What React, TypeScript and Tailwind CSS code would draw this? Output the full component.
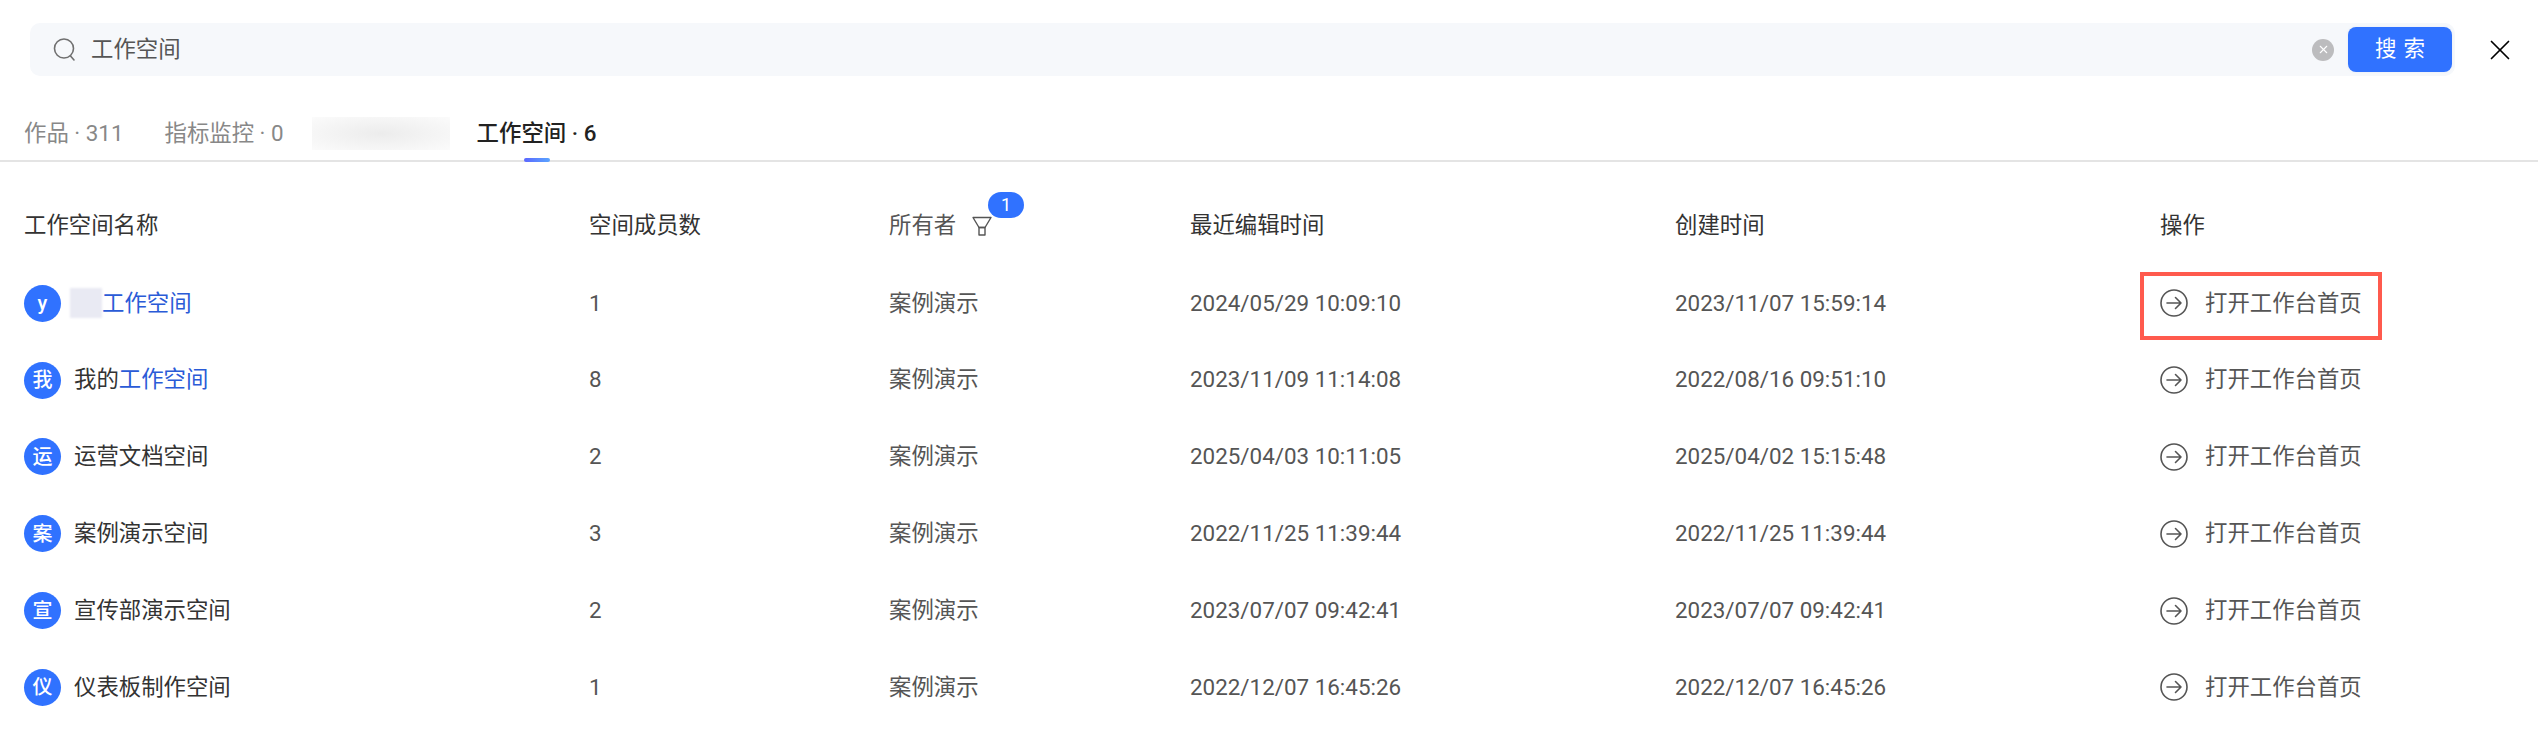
import { X } from 'lucide-react';

const ROWS = [
  { badge: 'y', prefix: '', blur: true, hit: '工作空间', members: 1, edited: '2024/05/29 10:09:10', created: '2023/11/07 15:59:14', marked: true },
  { badge: '我', prefix: '我的', hit: '工作空间', members: 8, edited: '2023/11/09 11:14:08', created: '2022/08/16 09:51:10' },
  { badge: '运', prefix: '运营文档空间', hit: '', members: 2, edited: '2025/04/03 10:11:05', created: '2025/04/02 15:15:48' },
  { badge: '案', prefix: '案例演示空间', hit: '', members: 3, edited: '2022/11/25 11:39:44', created: '2022/11/25 11:39:44' },
  { badge: '宣', prefix: '宣传部演示空间', hit: '', members: 2, edited: '2023/07/07 09:42:41', created: '2023/07/07 09:42:41' },
  { badge: '仪', prefix: '仪表板制作空间', hit: '', members: 1, edited: '2022/12/07 16:45:26', created: '2022/12/07 16:45:26' },
];

const GRID = 'grid grid-cols-[565px_300px_301px_485px_485px_1fr] pl-6 items-center';

function ArrowCircle() {
  return (
    <svg width="28" height="28" viewBox="0 0 28 28" fill="none" stroke="#555" strokeWidth="1.6" strokeLinecap="round" strokeLinejoin="round">
      <circle cx="14" cy="14" r="13" />
      <path d="M7 14h14M15.5 8.5 21 14l-5.5 5.5" />
    </svg>
  );
}

function Funnel() {
  return (
    <svg width="20" height="20" viewBox="0 0 20 20" fill="none" stroke="#555" strokeWidth="1.4" strokeLinejoin="round">
      <path d="M1 1.5h18l-6 10H7z" />
      <path d="M7 11.5h6V19H7z" />
    </svg>
  );
}

function SearchGlyph() {
  return (
    <svg width="24" height="24" viewBox="0 0 24 24" fill="none" stroke="#707070" strokeWidth="1.6" strokeLinecap="round">
      <circle cx="11" cy="10.5" r="9.5" />
      <path d="m17.5 18 3.5 4" />
    </svg>
  );
}

export default function App() {
  return (
    <div className="h-[732px] overflow-hidden bg-white font-['Roboto','Noto_Sans_CJK_SC',sans-serif] text-[22.4px] text-[#333]">
      <div className="flex items-center pt-[23px] pl-[30px]">
        <div className="flex h-[53px] w-[2425px] items-center rounded-[10px] bg-[#f6f8fb] pl-[23px] pr-[3px]">
          <SearchGlyph />
          <span className="ml-[14px] flex-1 text-[#555]">工作空间</span>
          <span className="mr-[14px] flex h-[22px] w-[22px] items-center justify-center rounded-full bg-[#bcbcbe] text-white">
            <X size={13} strokeWidth={2} />
          </span>
          <button className="h-[45px] w-[104px] rounded-[8px] bg-[#3072ff] pl-[7px] text-[21.5px] tracking-[7px] text-white shadow-[0_0_3px_#e4ebf8]">搜索</button>
        </div>
        <X size={34} strokeWidth={1.2} className="ml-[28px] text-black" />
      </div>

      <div className="mt-[38px] flex h-[48px] items-start gap-[41px] border-b-2 border-[#e4e4e4] pl-[24px] pt-[3px] text-[#888]">
        <span>作品 · 311</span>
        <span>指标监控 · 0</span>
        <span className="-ml-[13px] h-[33px] w-[138px] bg-[radial-gradient(ellipse_at_center,#ececec,#fbfbfb_100%)]" />
        <span className="relative -ml-[14px] h-[45px] font-medium text-[#222]">
          工作空间 · 6
          <span className="absolute bottom-0 left-[47px] h-1 w-[26px] rounded-sm bg-gradient-to-r from-[#5b66ff] to-[#5aa4ff]" />
        </span>
      </div>

      <div className={`${GRID} mt-[24px] h-[79px]`}>
        <span>工作空间名称</span>
        <span>空间成员数</span>
        <span className="relative flex items-center text-[#555]">
          所有者
          <span className="ml-[16px] mt-[2px]"><Funnel /></span>
          <span className="absolute -top-[17px] left-[99px] flex h-[26px] w-9 items-center justify-center rounded-full bg-[#3072ff] text-[18px] text-white">1</span>
        </span>
        <span>最近编辑时间</span>
        <span>创建时间</span>
        <span>操作</span>
      </div>

      {ROWS.map((row) => (
        <div key={row.badge} className={`${GRID} h-[76.8px]`}>
          <div className="flex items-center">
            <span className="flex h-[37px] w-[37px] items-center justify-center rounded-full bg-[#3072ff] text-[20px] font-medium text-white">{row.badge}</span>
            {row.blur && <span className="ml-[9px] h-[30px] w-[32px] bg-[#e9eaf3] blur-[1px]" />}
            <span className={row.blur ? '' : 'ml-[13px]'}>
              {row.prefix}
              <span className="text-[#2a5bd7]">{row.hit}</span>
            </span>
          </div>
          <span className="text-[#555]">{row.members}</span>
          <span className="text-[#555]">案例演示</span>
          <span className="text-[#555]">{row.edited}</span>
          <span className="text-[#555]">{row.created}</span>
          <div className="relative flex items-center gap-[17px] text-[#555]">
            <ArrowCircle />
            打开工作台首页
            {row.marked && <span className="absolute -left-[20px] -top-[15px] h-[68px] w-[242px] border-4 border-[#ff5a4d]" />}
          </div>
        </div>
      ))}
    </div>
  );
}
